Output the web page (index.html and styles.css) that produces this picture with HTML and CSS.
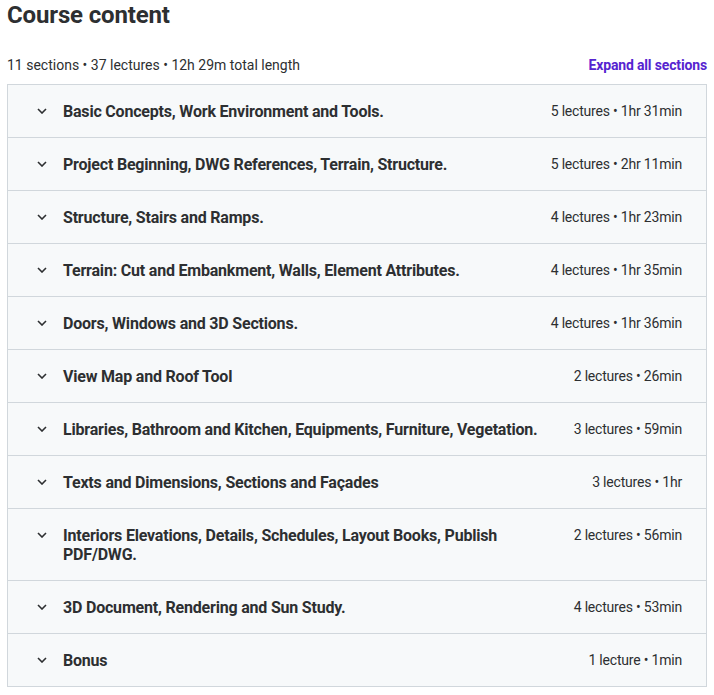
FILE: index.html
```html
<!DOCTYPE html>
<html lang="en">
<head>
<meta charset="utf-8">
<link rel="stylesheet" href="styles.css">
</head>
<body>
<div class="page">
  <h2 class="title">Course content</h2>
  <div class="summary">
    <span class="summary-text">11 sections • 37 lectures • 12h 29m total length</span>
    <span class="expand">Expand all sections</span>
  </div>
  <div class="sections">
    <div class="section"><span class="chev"><svg width="10" height="6" viewBox="0 0 10 6"><path d="M1 1l4 4 4-4" fill="none" stroke="#2d2f31" stroke-width="1.6"/></svg></span><span class="name">Basic Concepts, Work Environment and Tools.</span><span class="meta">5 lectures • 1hr 31min</span></div>
    <div class="section"><span class="chev"><svg width="10" height="6" viewBox="0 0 10 6"><path d="M1 1l4 4 4-4" fill="none" stroke="#2d2f31" stroke-width="1.6"/></svg></span><span class="name">Project Beginning, DWG References, Terrain, Structure.</span><span class="meta">5 lectures • 2hr 11min</span></div>
    <div class="section"><span class="chev"><svg width="10" height="6" viewBox="0 0 10 6"><path d="M1 1l4 4 4-4" fill="none" stroke="#2d2f31" stroke-width="1.6"/></svg></span><span class="name">Structure, Stairs and Ramps.</span><span class="meta">4 lectures • 1hr 23min</span></div>
    <div class="section"><span class="chev"><svg width="10" height="6" viewBox="0 0 10 6"><path d="M1 1l4 4 4-4" fill="none" stroke="#2d2f31" stroke-width="1.6"/></svg></span><span class="name">Terrain: Cut and Embankment, Walls, Element Attributes.</span><span class="meta">4 lectures • 1hr 35min</span></div>
    <div class="section"><span class="chev"><svg width="10" height="6" viewBox="0 0 10 6"><path d="M1 1l4 4 4-4" fill="none" stroke="#2d2f31" stroke-width="1.6"/></svg></span><span class="name">Doors, Windows and 3D Sections.</span><span class="meta">4 lectures • 1hr 36min</span></div>
    <div class="section"><span class="chev"><svg width="10" height="6" viewBox="0 0 10 6"><path d="M1 1l4 4 4-4" fill="none" stroke="#2d2f31" stroke-width="1.6"/></svg></span><span class="name">View Map and Roof Tool</span><span class="meta">2 lectures • 26min</span></div>
    <div class="section"><span class="chev"><svg width="10" height="6" viewBox="0 0 10 6"><path d="M1 1l4 4 4-4" fill="none" stroke="#2d2f31" stroke-width="1.6"/></svg></span><span class="name">Libraries, Bathroom and Kitchen, Equipments, Furniture, Vegetation.</span><span class="meta">3 lectures • 59min</span></div>
    <div class="section"><span class="chev"><svg width="10" height="6" viewBox="0 0 10 6"><path d="M1 1l4 4 4-4" fill="none" stroke="#2d2f31" stroke-width="1.6"/></svg></span><span class="name">Texts and Dimensions, Sections and Façades</span><span class="meta">3 lectures • 1hr</span></div>
    <div class="section"><span class="chev"><svg width="10" height="6" viewBox="0 0 10 6"><path d="M1 1l4 4 4-4" fill="none" stroke="#2d2f31" stroke-width="1.6"/></svg></span><span class="name">Interiors Elevations, Details, Schedules, Layout Books, Publish PDF/DWG.</span><span class="meta">2 lectures • 56min</span></div>
    <div class="section"><span class="chev"><svg width="10" height="6" viewBox="0 0 10 6"><path d="M1 1l4 4 4-4" fill="none" stroke="#2d2f31" stroke-width="1.6"/></svg></span><span class="name">3D Document, Rendering and Sun Study.</span><span class="meta">4 lectures • 53min</span></div>
    <div class="section"><span class="chev"><svg width="10" height="6" viewBox="0 0 10 6"><path d="M1 1l4 4 4-4" fill="none" stroke="#2d2f31" stroke-width="1.6"/></svg></span><span class="name">Bonus</span><span class="meta">1 lecture • 1min</span></div>
  </div>
</div>
</body>
</html>
```
FILE: styles.css
```css
html, body {
  margin: 0;
  padding: 0;
  background: #ffffff;
}
body {
  font-family: Roboto, "Liberation Sans", sans-serif;
  color: #2d2f31;
}
.page {
  width: 700px;
  margin: 0 7px;
}
.title {
  margin: 0;
  padding-top: 2px;
  font-size: 24px;
  line-height: 26px;
  font-weight: 700;
  color: #2d2f31;
  letter-spacing: -0.15px;
}
.summary {
  display: flex;
  justify-content: space-between;
  align-items: center;
  margin-top: 28px;
  font-size: 14px;
  line-height: 18px;
  height: 18px;
}
.summary-text {
  color: #2d2f31;
}
.expand {
  color: #5624d0;
  font-weight: 700;
  letter-spacing: -0.15px;
}
.sections {
  margin-top: 10px;
  border: 1px solid #d1d7dc;
  border-top: none;
}
.section {
  display: flex;
  align-items: flex-start;
  background: #f7f9fa;
  border-top: 1px solid #d1d7dc;
  padding: 16px 24px 16px 29px;
}
.chev {
  display: flex;
  align-items: center;
  justify-content: center;
  width: 10px;
  height: 20px;
  margin-right: 16px;
  flex-shrink: 0;
}
.chev svg {
  display: block;
}
.name {
  flex: 1;
  font-size: 16px;
  line-height: 19px;
  font-weight: 700;
  letter-spacing: -0.2px;
  padding-top: 1px;
  padding-right: 32px;
}
.meta {
  font-size: 14px;
  line-height: 20px;
  white-space: nowrap;
  letter-spacing: -0.2px;
  color: #2d2f31;
}
```
